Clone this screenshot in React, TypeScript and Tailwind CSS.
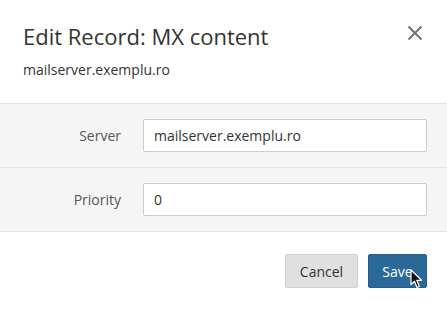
import React from "react";

export default function App() {
  return (
    <div className="w-[447px] h-[311px] bg-white overflow-hidden text-[#333]" style={{ fontFamily: '"Open Sans", sans-serif' }}>
      <div className="flex items-start justify-between pl-[23px] pr-[24px] pt-[21px] pb-[23px]">
        <div className="flex flex-col gap-[9px]">
          <div className="text-[22px] leading-[30px] text-[#333]">Edit Record: MX content</div>
          <div className="text-[14px] leading-[20px] text-[#333]">mailserver.exemplu.ro</div>
        </div>
        <svg width="16" height="16" viewBox="0 0 16 16" className="mt-[4px]">
          <path d="M1.5 1.5 L14.5 14.5 M14.5 1.5 L1.5 14.5" stroke="#777" strokeWidth="2.2" fill="none" />
        </svg>
      </div>
      <div className="bg-[#f5f5f5] border-t border-[#e3e3e3]">
        <div className="flex items-center h-[64px] border-b border-[#e3e3e3] pr-[20px]">
          <div className="w-[121px] text-right text-[14px] text-[#555]">Server</div>
          <div className="ml-[22px] flex-1 h-[33px] bg-white border border-[#ccc] rounded-[2px] flex items-center pl-[10px] text-[14px] text-[#333]">mailserver.exemplu.ro</div>
        </div>
        <div className="flex items-center h-[64px] border-b border-[#e3e3e3] pr-[20px]">
          <div className="w-[121px] text-right text-[14px] text-[#555]">Priority</div>
          <div className="ml-[22px] flex-1 h-[33px] bg-white border border-[#ccc] rounded-[2px] flex items-center pl-[10px] text-[14px] text-[#333]">0</div>
        </div>
      </div>
      <div className="flex justify-end gap-[10px] pr-[20px] pt-[22px]">
        <div className="w-[73px] h-[34px] bg-[#e0e0e0] border border-[#d0d0d0] rounded-[2px] flex items-center justify-center text-[14px] text-[#333]">Cancel</div>
        <div className="relative w-[59px] h-[34px] bg-[#2b6a98] border border-[#255d86] rounded-[2px] flex items-center justify-center text-[14px] text-white">
          Save
          <svg width="14" height="20" viewBox="0 0 14 20" className="absolute left-[41px] top-[14px]">
            <path d="M1 1 L1 15.5 L4.5 12.2 L7 18.5 L9.3 17.5 L6.8 11.3 L11.5 11.3 Z" fill="#111" stroke="#fff" strokeWidth="1.2" strokeLinejoin="round" />
          </svg>
        </div>
      </div>
    </div>
  );
}
